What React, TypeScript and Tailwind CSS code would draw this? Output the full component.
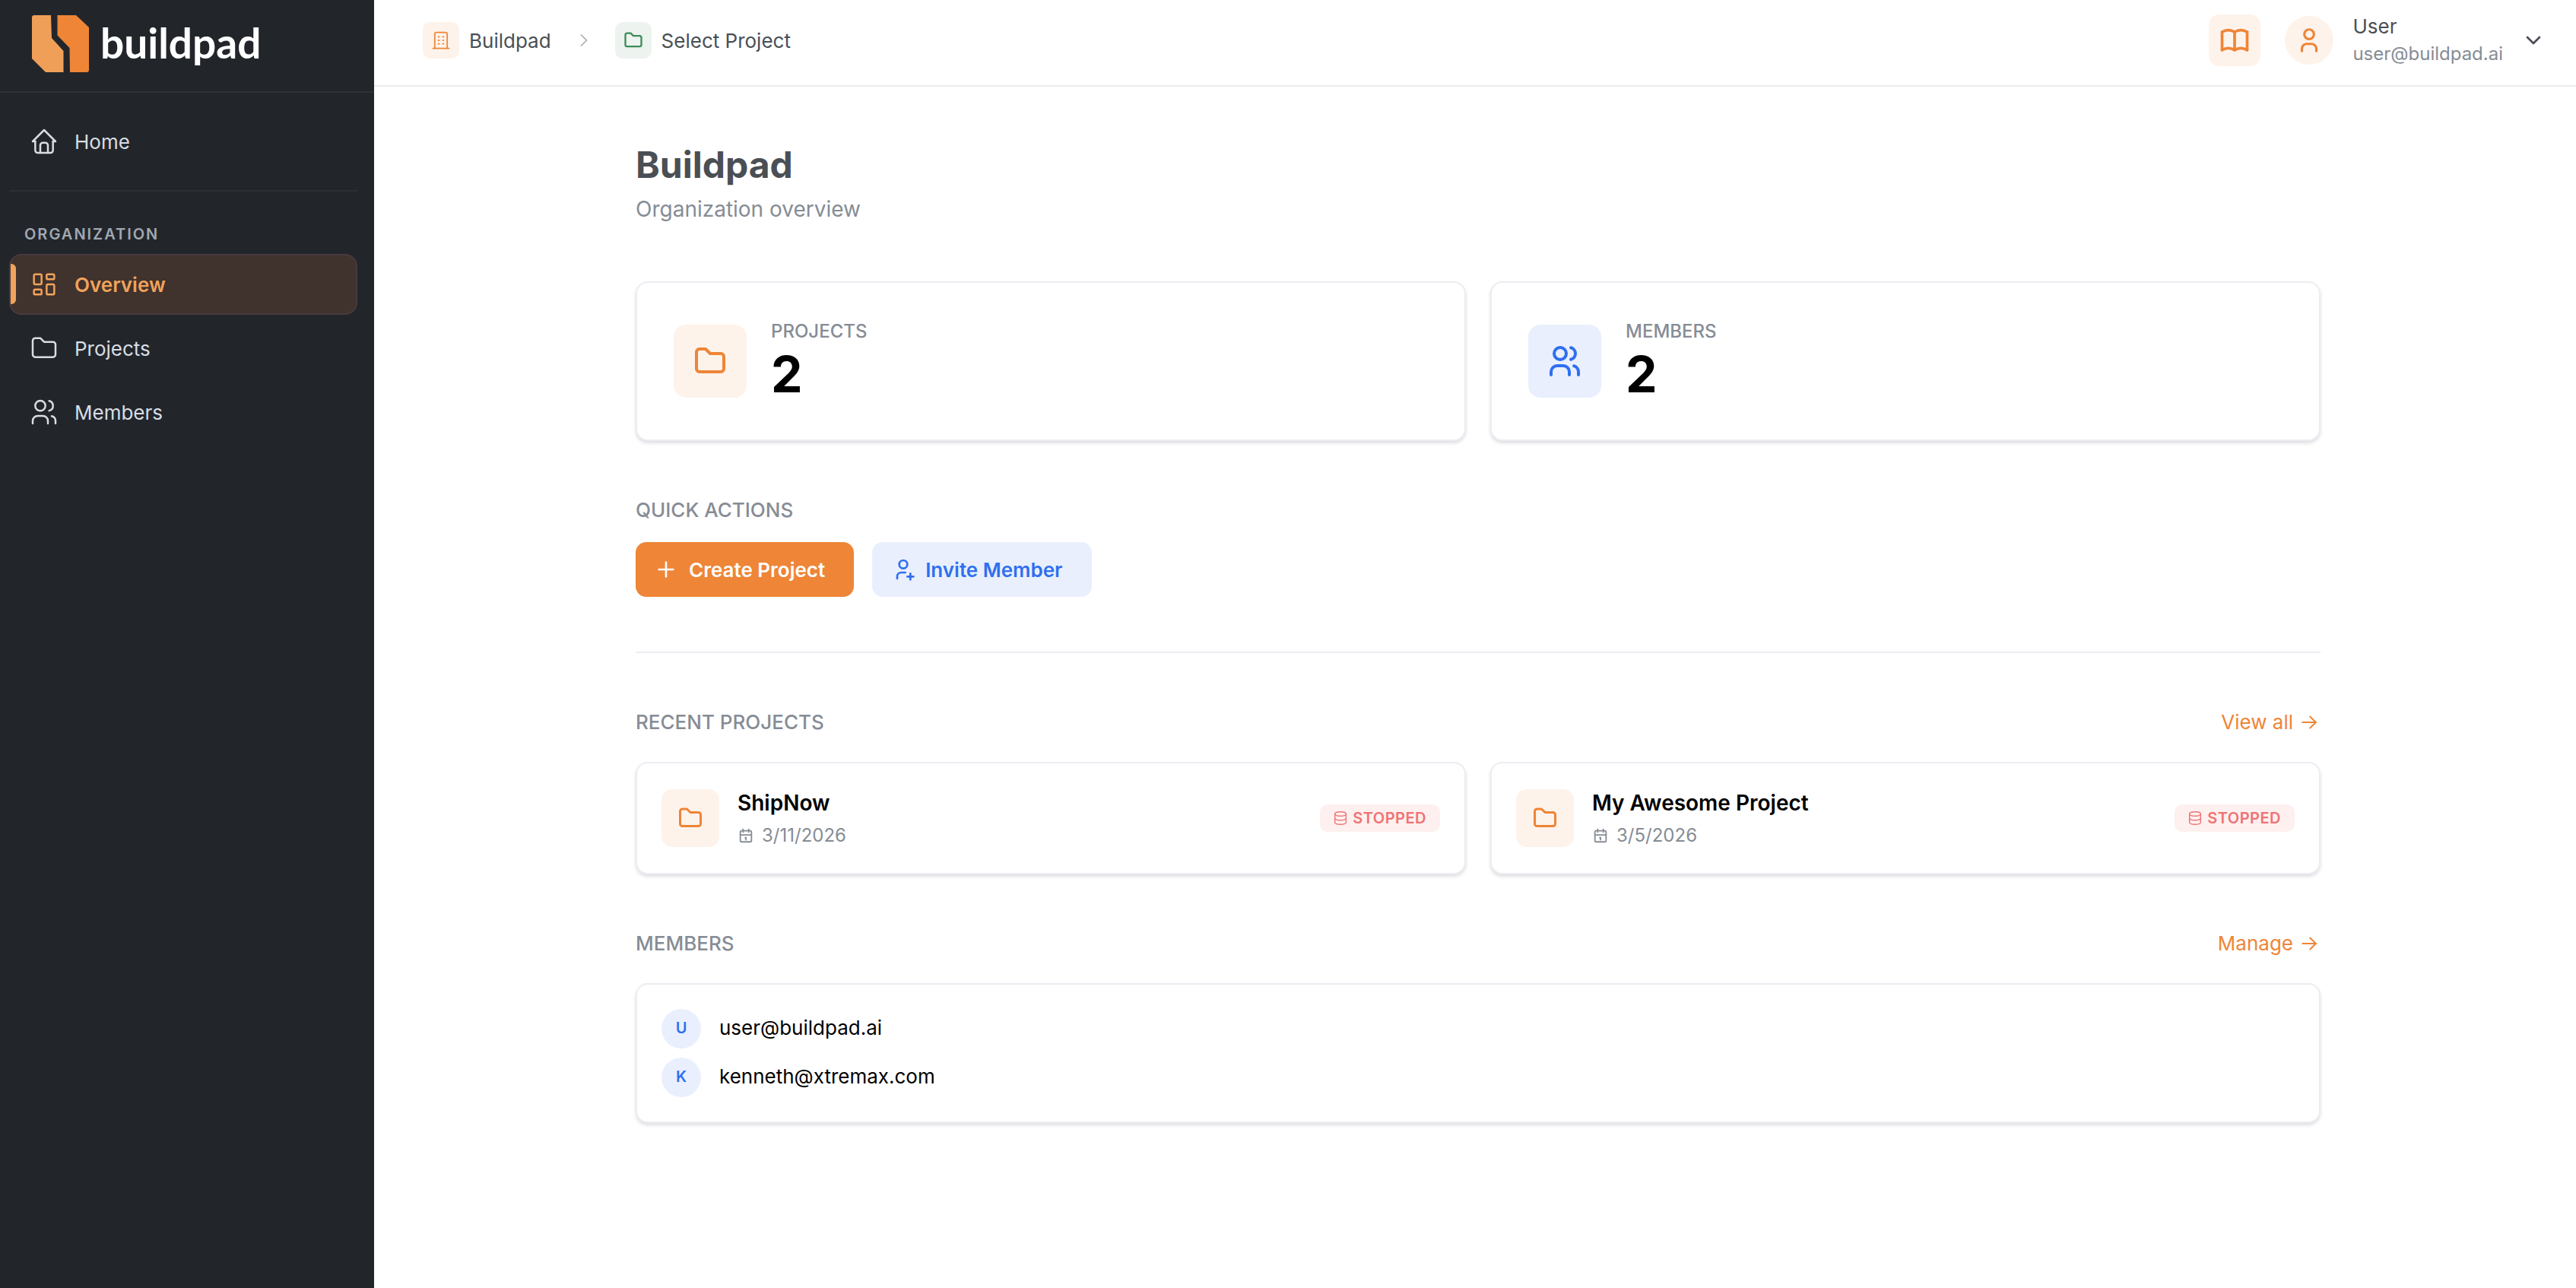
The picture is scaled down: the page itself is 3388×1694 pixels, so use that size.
import type { ReactNode } from 'react';
import {
  TbArrowRight,
  TbBook,
  TbBuilding,
  TbCalendar,
  TbChevronDown,
  TbChevronRight,
  TbDatabase,
  TbFolder,
  TbHome,
  TbLayoutDashboard,
  TbPlus,
  TbUser,
  TbUserPlus,
  TbUsers,
} from 'react-icons/tb';

function Logo() {
  return (
    <svg width="76" height="76" viewBox="0 0 76 76" className="shrink-0">
      <path d="M3 0H25L26 30L41.5 47V75H18L0 57V3Q0 0 3 0Z" fill="#f09f58" />
      <path d="M33.5 0H58L75 16V72Q75 75 72 75H50L49.5 43L33.5 26.5Z" fill="#ee8537" />
    </svg>
  );
}

function NavItem({ icon, label, active }: { icon: ReactNode; label: string; active?: boolean }) {
  return (
    <div
      className={`relative ml-[12px] mr-[22px] flex h-[80px] items-center gap-[20px] rounded-[16px] border-2 pl-[24px] text-[26px] ${
        active ? 'border-[#483a3f] bg-[#40322c] font-semibold text-[#f0a35c]' : 'border-transparent text-[#d8dde3]'
      }`}
    >
      {active && <span className="absolute left-0 top-[11px] h-[53px] w-[7px] rounded-r-[6px] bg-[#f0a35c]" />}
      {icon}
      <span>{label}</span>
    </div>
  );
}

function SectionLabel({ children }: { children: ReactNode }) {
  return <div className="text-[26px] font-medium uppercase leading-[36px] text-[#868c95]">{children}</div>;
}

function StatCard({ icon, tile, label }: { icon: ReactNode; tile: string; label: string }) {
  return (
    <div className="flex h-[210px] items-center gap-[32px] rounded-[16px] border-2 border-[#ecedf2] bg-white pl-[48px] shadow-[0_3px_4px_rgba(30,30,60,0.14)]">
      <div className={`flex h-[96px] w-[96px] items-center justify-center rounded-[16px] ${tile}`}>{icon}</div>
      <div className="pt-[3px]">
        <div className="text-[24px] font-medium uppercase leading-[28px] text-[#868c95]">{label}</div>
        <div className="mt-[2px] text-[66px] font-bold leading-[80px] text-black">2</div>
      </div>
    </div>
  );
}

function ProjectCard({ name, date }: { name: string; date: string }) {
  return (
    <div className="flex h-[148px] items-center rounded-[16px] border-2 border-[#ecedf2] bg-white px-[32px] shadow-[0_3px_4px_rgba(30,30,60,0.14)]">
      <div className="flex h-[76px] w-[76px] items-center justify-center rounded-[14px] bg-[#fdf3eb]">
        <TbFolder size={36} strokeWidth={2} className="text-[#ee8537]" />
      </div>
      <div className="ml-[24px]">
        <div className="text-[28px] font-semibold leading-[40px] text-black">{name}</div>
        <div className="mt-[5px] flex items-center gap-[10px] text-[24px] leading-[36px] text-[#868c95]">
          <TbCalendar size={22} strokeWidth={2} />
          {date}
        </div>
      </div>
      <div className="ml-auto flex h-[36px] items-center gap-[5px] rounded-[10px] bg-[#fdf0ef] pl-[16px] pr-[18px] text-[20px] font-semibold tracking-[0.5px] text-[#ef7375]">
        <TbDatabase size={22} strokeWidth={1.5} />
        STOPPED
      </div>
    </div>
  );
}

function Member({ letter, email }: { letter: string; email: string }) {
  return (
    <div className="flex items-center gap-[24px]">
      <div className="flex h-[52px] w-[52px] items-center justify-center rounded-full bg-[#e9effd] pb-[2px] text-[20px] font-semibold text-[#2f6ff0]">
        {letter}
      </div>
      <span className="pb-[3px] text-[26px] text-black">{email}</span>
    </div>
  );
}

export default function App() {
  return (
    <div className="flex h-screen overflow-hidden bg-white font-['Inter',sans-serif]">
      <aside className="w-[492px] shrink-0 bg-[#22262b]">
        <div className="flex h-[122px] items-start gap-[14px] border-b-2 border-[#2f3338] pl-[42px] pt-[20px]">
          <Logo />
          <span className="mt-[2px] font-['Lato',sans-serif] text-[55px] font-bold leading-[68px] text-white">buildpad</span>
        </div>
        <div className="pt-[24px]">
          <NavItem icon={<TbHome size={40} strokeWidth={1.5} />} label="Home" />
        </div>
        <div className="ml-[12px] mr-[22px] mt-[24px] h-[2px] bg-[#2c3035]" />
        <div className="mb-[12px] ml-[32px] mt-[42px] text-[20px] font-semibold uppercase leading-[28px] tracking-[2px] text-[#a1a8b1]">
          Organization
        </div>
        <div className="flex flex-col gap-[4px]">
          <NavItem active icon={<TbLayoutDashboard size={40} strokeWidth={1.5} />} label="Overview" />
          <NavItem icon={<TbFolder size={40} strokeWidth={1.5} />} label="Projects" />
          <NavItem icon={<TbUsers size={40} strokeWidth={1.5} />} label="Members" />
        </div>
      </aside>

      <div className="min-w-0 flex-1">
        <header className="flex h-[114px] items-center border-b-2 border-[#ebebf0] pb-[6px] pl-[64px] pr-[40px]">
          <div className="flex h-[48px] w-[48px] items-center justify-center rounded-[10px] bg-[#fdf3eb] text-[#ee8537]">
            <TbBuilding size={28} strokeWidth={1.5} />
          </div>
          <span className="ml-[13px] text-[26px] text-[#4a4f55]">Buildpad</span>
          <TbChevronRight size={28} strokeWidth={1.5} className="ml-[29px] text-[#a8adb5]" />
          <div className="ml-[27px] flex h-[48px] w-[48px] items-center justify-center rounded-[10px] bg-[#edf3ef] text-[#3c8c5a]">
            <TbFolder size={28} strokeWidth={2} />
          </div>
          <span className="ml-[13px] text-[26px] text-[#4a4f55]">Select Project</span>
          <div className="ml-auto flex h-[68px] w-[68px] items-center justify-center rounded-[14px] bg-[#fdf3eb] text-[#ee8537]">
            <TbBook size={44} strokeWidth={2} />
          </div>
          <div className="ml-[32px] flex h-[64px] w-[64px] items-center justify-center rounded-full bg-[#fdf3eb] text-[#ee8537]">
            <TbUser size={38} strokeWidth={2} />
          </div>
          <div className="ml-[25px]">
            <div className="text-[26px] leading-[36px] text-[#4a4f55]">User</div>
            <div className="text-[24px] leading-[36px] text-[#868c95]">user@buildpad.ai</div>
          </div>
          <TbChevronDown size={32} strokeWidth={2} className="ml-[24px] text-[#4a4f55]" />
        </header>

        <main className="ml-[344px] w-[2216px] pt-[73px]">
          <h1 className="text-[48px] font-bold leading-[60px] text-[#4a4f55]">Buildpad</h1>
          <p className="mt-[10px] text-[28px] leading-[36px] text-[#868c95]">Organization overview</p>

          <div className="mt-[77px] grid grid-cols-2 gap-[32px]">
            <StatCard label="Projects" tile="bg-[#fdf3eb]" icon={<TbFolder size={48} strokeWidth={2} className="text-[#ee8537]" />} />
            <StatCard label="Members" tile="bg-[#e9effd]" icon={<TbUsers size={48} strokeWidth={2} className="text-[#2f6ff0]" />} />
          </div>

          <div className="mt-[73px]">
            <SectionLabel>Quick Actions</SectionLabel>
          </div>
          <div className="mt-[24px] flex gap-[24px]">
            <button className="flex h-[72px] items-center gap-[14px] rounded-[14px] bg-[#ee8537] pl-[24px] pr-[38px] text-[26px] font-semibold text-white">
              <TbPlus size={32} strokeWidth={2} />
              Create Project
            </button>
            <button className="flex h-[72px] items-center gap-[13px] rounded-[14px] bg-[#e9effd] pl-[25px] pr-[39px] text-[26px] font-semibold text-[#2f6ff0]">
              <TbUserPlus size={32} strokeWidth={2} />
              Invite Member
            </button>
          </div>

          <div className="mt-[72px] h-[2px] bg-[#ecedf2]" />

          <div className="mt-[73px] flex items-center justify-between">
            <SectionLabel>Recent Projects</SectionLabel>
            <a className="flex items-center gap-[6px] text-[26px] leading-[36px] text-[#ee8537]">
              View all <TbArrowRight size={30} strokeWidth={1.5} />
            </a>
          </div>
          <div className="mt-[34px] grid grid-cols-2 gap-[32px]">
            <ProjectCard name="ShipNow" date="3/11/2026" />
            <ProjectCard name="My Awesome Project" date="3/5/2026" />
          </div>

          <div className="mt-[73px] flex items-center justify-between">
            <SectionLabel>Members</SectionLabel>
            <a className="flex items-center gap-[6px] text-[26px] leading-[36px] text-[#ee8537]">
              Manage <TbArrowRight size={30} strokeWidth={1.5} />
            </a>
          </div>
          <div className="mt-[34px] flex flex-col gap-[12px] rounded-[16px] border-2 border-[#ecedf2] bg-white p-[32px] shadow-[0_3px_4px_rgba(30,30,60,0.14)]">
            <Member letter="U" email="user@buildpad.ai" />
            <Member letter="K" email="kenneth@xtremax.com" />
          </div>
        </main>
      </div>
    </div>
  );
}
